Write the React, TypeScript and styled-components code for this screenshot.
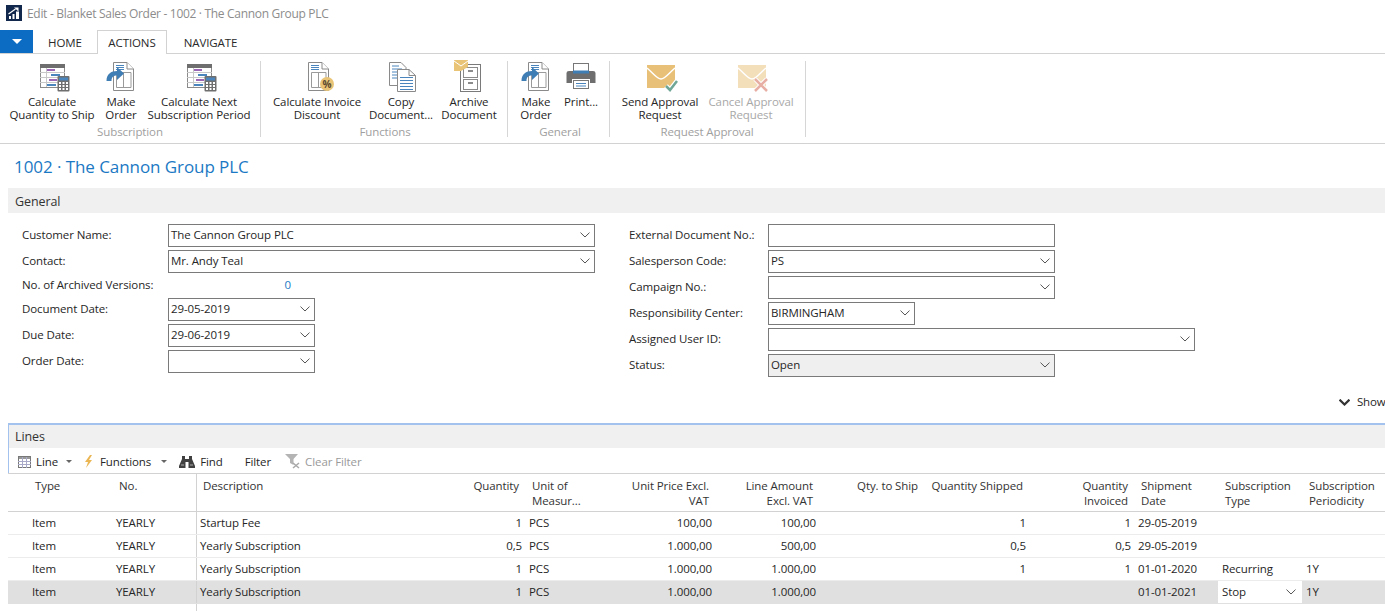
import React from "react";
import styled, { createGlobalStyle } from "styled-components";

const Global = createGlobalStyle`
  html, body { margin: 0; padding: 0; background: #fff; }
  body { width: 1385px; height: 611px; overflow: hidden; font-family: "Open Sans", "Noto Sans", sans-serif; font-size: 12px; color: #262626; }
  * { box-sizing: border-box; }
`;

const Page = styled.div`
  width: 1385px; height: 611px; overflow: hidden; display: flex; flex-direction: column;
  font-size: 11.5px; letter-spacing: -0.1px;
`;
const TitleBar = styled.div`
  height: 30px; display: flex; align-items: center; gap: 5px; padding: 0 0 4px 6px; flex: none;
`;
const TitleText = styled.span`
  color: #8c8c8c; font-size: 12px; letter-spacing: -0.31px;
`;
const TabBar = styled.div`
  height: 24px; display: flex; border-bottom: 1px solid #d2d2d2; flex: none;
`;
const AppMenu = styled.div`
  width: 33px; height: 23px; background: #0c6cc4; display: flex; align-items: center; justify-content: center;
`;
const Tab = styled.div<{ $active?: boolean; $w: number; $ml: number }>`
  width: ${p => p.$w}px; height: ${p => (p.$active ? 24 : 23)}px; margin-left: ${p => p.$ml}px; display: flex; align-items: center; justify-content: center;
  font-size: 11.5px; color: #2a2a2a; background: #fff; padding-top: ${p => (p.$active ? 0 : 2)}px;
  border: ${p => (p.$active ? "1px solid #d2d2d2" : "none")}; border-bottom: none;
`;
const Ribbon = styled.div`
  height: 90px; display: flex; border-bottom: 1px solid #d2d2d2; padding-top: 7px; flex: none;
`;
const Group = styled.div<{ $pl: number; $pr: number }>`
  height: 76px; padding: 0 ${p => p.$pr}px 0 ${p => p.$pl}px; display: flex; flex-direction: column;
  border-right: 1px solid #d6d6d6;
`;
const GroupButtons = styled.div`
  display: flex; height: 64px; flex: none;
`;
const GroupLabel = styled.div`
  text-align: center; color: #a0a0a0; font-size: 11.5px; line-height: 14px;
`;
const RibbonButton = styled.div<{ $w: number; $disabled?: boolean }>`
  width: ${p => p.$w}px; display: flex; flex-direction: column; align-items: center; text-align: center;
  line-height: 13px; white-space: nowrap; color: ${p => (p.$disabled ? "#a8a8a8" : "#262626")};
`;
const IconSlot = styled.div<{ $dx?: number }>`
  height: 30px; margin: 1px 0 3px ${p => p.$dx ?? 0}px; flex: none;
  svg { display: block; overflow: visible; }
`;
const Heading = styled.h1`
  margin: 0; height: 44px; padding: 12px 0 0 14px; font-size: 17px; font-weight: 400; line-height: 21px; color: #1b79c4; letter-spacing: -0.07px; flex: none;
`;
const Band = styled.div`
  margin-left: 8px; height: 25px; background: #f0f0f0; display: flex; align-items: center; padding: 1px 0 0 7px; font-size: 12.5px; color: #333; flex: none;
`;
const Form = styled.div`
  height: 163px; padding: 11px 0 0 22px; display: flex; align-items: flex-start; flex: none;
`;
const FormCol = styled.div<{ $w: number }>`
  width: ${p => p.$w}px; display: flex; flex-direction: column; flex: none;
`;
const FieldRow = styled.div<{ $h?: number }>`
  height: ${p => p.$h ?? 26}px; display: flex; align-items: flex-start; flex: none;
`;
const Label = styled.div<{ $w: number; $lh?: number }>`
  width: ${p => p.$w}px; flex: none; line-height: ${p => p.$lh ?? 21}px;
`;
const Input = styled.div<{ $w: number; $bg?: string }>`
  width: ${p => p.$w}px; height: 23px; border: 1px solid #7a7a7a; background: ${p => p.$bg ?? "#fff"};
  display: flex; align-items: center; justify-content: space-between; padding: 0 4px 1px 2px; line-height: 20px;
`;
const ValueLink = styled.div`
  width: 123px; text-align: right; line-height: 18px; color: #1b79c4;
`;
const ShowRow = styled.div`
  height: 48px; padding: 17px 0 0 1339px; display: flex; align-items: flex-start; gap: 7px; white-space: nowrap; line-height: 18px; letter-spacing: -0.2px; flex: none;
  svg { margin-top: 6px; flex: none; }
`;
const LinesBox = styled.div`
  margin-left: 8px; border-top: 2px solid #a3c3ee; border-left: 1px solid #a3c3ee; height: 50px; flex: none; margin-top: -1px;
`;
const LinesHead = styled.div`
  height: 23px; background: #f0f0f0; display: flex; align-items: center; padding-left: 6px; font-size: 12.5px; color: #333;
`;
const Toolbar = styled.div`
  height: 25px; display: flex; align-items: center; padding: 2px 0 0 9px; line-height: 16px;
`;
const ToolItem = styled.div<{ $mr: number; $gap?: number; $disabled?: boolean }>`
  display: flex; align-items: center; gap: ${p => p.$gap ?? 5}px; margin-right: ${p => p.$mr}px; color: ${p => (p.$disabled ? "#9a9a9a" : "#262626")};
`;
const Caret = styled.span`
  width: 0; height: 0; border-left: 3px solid transparent; border-right: 3px solid transparent; border-top: 3px solid #666; margin-left: 3px;
`;
const COLS = "104px 84px 269px 60px 86px 104px 104px 105px 105px 105px 84px 84px 83px";
const TableWrap = styled.div`
  margin-left: 8px; border-top: 1px solid #d2d2d2; flex: 1;
`;
const HeaderRow = styled.div`
  display: grid; grid-template-columns: ${COLS}; height: 38px; border-bottom: 1px solid #d2d2d2;
`;
const HeadCell = styled.div<{ $right?: boolean; $divider?: boolean; $first?: boolean }>`
  padding: 4px 6px 0 ${p => (p.$first ? 27 : p.$divider ? 6 : 7)}px; line-height: 15px; text-align: ${p => (p.$right ? "right" : "left")}; color: #333;
  border-left: ${p => (p.$divider ? "1px solid #d2d2d2" : "none")}; white-space: pre-line;
`;
const Row = styled.div<{ $selected?: boolean }>`
  display: grid; grid-template-columns: ${COLS}; height: 23px; border-bottom: 1px solid ${p => (p.$selected ? "#e0e0e0" : "#ececec")};
  background: ${p => (p.$selected ? "#e0e0e0" : "#fff")};
`;
const Cell = styled.div<{ $right?: boolean; $divider?: boolean; $first?: boolean; $edit?: boolean }>`
  padding: 0 ${p => (p.$right ? 3 : 4)}px 0 ${p => (p.$first ? 24 : p.$divider ? 3 : 4)}px; line-height: 22px; text-align: ${p => (p.$right ? "right" : "left")};
  border-left: ${p => (p.$divider ? "1px solid #d2d2d2" : "none")}; white-space: nowrap; overflow: hidden;
  ${p => (p.$edit ? "background:#fff;display:flex;align-items:center;justify-content:space-between;padding-right:6px;" : "")}
`;
const Filler = styled.div`
  height: 8px; margin-left: 188px; border-left: 1px solid #d2d2d2;
`;

const Chevron = ({ c = "#555", w = 1, s = 10 }: { c?: string; w?: number; s?: number }) => (
  <svg width={s} height={s * 0.6} viewBox="0 0 10 6" fill="none"><path d="M0.5 0.6 L5 5 L9.5 0.6" stroke={c} strokeWidth={w} /></svg>
);

const AppIcon = () => (
  <svg width="16" height="16" viewBox="0 0 16 16">
    <rect width="16" height="16" fill="#12284c" />
    <path d="M3 14V11H5V14ZM6.5 14V9H8.5V14ZM10 14V6.5H13V14Z" fill="#fff" />
    <path d="M2.5 9 L9.5 4" stroke="#fff" strokeWidth="1.2" fill="none" />
    <path d="M8 2.5H12.5V6.5Z" fill="#fff" />
  </svg>
);

const CalcIcon = () => (
  <svg width="30" height="30" viewBox="0 0 30 30">
    <rect x="0.5" y="2.5" width="24" height="23" fill="#fff" stroke="#8a8a8a" />
    <rect x="0" y="2" width="25" height="4" fill="#6e6e6e" />
    <g stroke="#c8c8c8"><path d="M0 10.5H25M0 15.5H25M0 20.5H25M6.5 6V25" /></g>
    <rect x="7" y="7" width="8" height="2" fill="#9a65b4" />
    <rect x="11" y="12" width="9" height="2" fill="#4a86bd" />
    <rect x="9" y="17" width="8" height="2" fill="#9a65b4" />
    <rect x="7" y="22" width="9" height="2" fill="#4a86bd" />
    <rect x="17.5" y="14" width="12" height="15.5" rx="1" fill="#6f6f6f" />
    <rect x="19" y="15.5" width="9" height="3" fill="#4a86bd" />
    <g fill="#fff">
      {[19, 22.5, 26].map(x => [20, 23, 26].map(y => <rect key={`${x}-${y}`} x={x} y={y} width="2" height="2" />))}
    </g>
  </svg>
);

const Doc = () => (
  <>
    <path d="M7.5 0.5 H21 L27.5 7 V28.5 H7.5 Z" fill="#fff" stroke="#8a8a8a" />
    <path d="M21 0.5 V7 H27.5" fill="#fff" stroke="#8a8a8a" />
    <path d="M10 3.5h8M10 5.5h8M10 7.5h8" stroke="#4a86bd" />
    <path d="M10.5 10.5 H25 V25.5 H10.5 Z M17.5 10.5 V25.5" fill="none" stroke="#9a9a9a" />
  </>
);
const MakeOrderIcon = () => (
  <svg width="30" height="30" viewBox="0 0 30 30">
    <Doc />
    <path d="M0.5 19 C0.5 12 5 9 11 9 V5 L18 11.5 L11 18 V13.5 C7.5 13.5 5.5 15 5.5 19 Z" fill="#3f7db5" />
  </svg>
);
const DiscountIcon = () => (
  <svg width="30" height="30" viewBox="0 0 30 30">
    <g transform="translate(-1 0)"><Doc /></g>
    <circle cx="25" cy="22" r="7" fill="#e9c477" />
    <text x="25" y="26" textAnchor="middle" fontSize="10" fontWeight="700" fill="#5a4a30" fontFamily="Open Sans">%</text>
  </svg>
);
const CopyIcon = () => (
  <svg width="30" height="30" viewBox="0 0 30 30">
    <path d="M3.5 0.5 H15 L20 5.5 V23.5 H3.5 Z" fill="#fff" stroke="#8a8a8a" />
    <path d="M6 4h7M6 7h10M6 10h10M6 13h10M6 16h10" stroke="#4a86bd" />
    <path d="M11.5 7.5 H23 L29.5 13.5 V29.5 H11.5 Z" fill="#fff" stroke="#8a8a8a" />
    <path d="M23 7.5V13.5H29.5" fill="none" stroke="#8a8a8a" />
    <path d="M14 15.5h13M14 18.5h13M14 21.5h13M14 24.5h13M14 27.5h13" stroke="#4a86bd" />
  </svg>
);
const ArchiveIcon = () => (
  <svg width="30" height="30" viewBox="0 0 30 30">
    <rect x="6.5" y="2.5" width="20" height="27" fill="#fff" stroke="#7a7a7a" />
    <rect x="9.5" y="5.5" width="14" height="10" fill="#fff" stroke="#8a8a8a" />
    <rect x="9.5" y="17.5" width="14" height="10" fill="#fff" stroke="#8a8a8a" />
    <path d="M14 9h5M14 21h5" stroke="#666" strokeWidth="1.5" />
    <path d="M0 -2H14V5L7 9H0Z" fill="#e9c477" />
    <path d="M0 -1 L7 4 L14 -1" stroke="#fff" fill="none" />
  </svg>
);
const PrintIcon = () => (
  <svg width="30" height="30" viewBox="0 0 30 30">
    <rect x="7.5" y="1.5" width="15" height="9" fill="#fff" stroke="#777" />
    <path d="M3 9 H27 Q29.5 9 29.5 11 V21 H24 V17 H6 V21 H0.5 V11 Q0.5 9 3 9 Z" fill="#6e6e6e" />
    <rect x="7" y="8.5" width="16" height="3" fill="#3f7db5" />
    <rect x="7.5" y="18.5" width="15" height="8" fill="#fff" stroke="#777" />
    <path d="M10 21.5h10M10 24h10" stroke="#4a86bd" />
  </svg>
);
const MailIcon = ({ cancel }: { cancel?: boolean }) => (
  <svg width="32" height="30" viewBox="0 0 32 30">
    <g opacity={cancel ? 0.5 : 1}>
      <rect x="0" y="3" width="28" height="23" fill="#e9c077" />
      <path d="M0 6 C7 12 10 17 14 17 C18 17 21 12 28 6" stroke="#fff" strokeWidth="1.5" fill="none" />
      {cancel ? (
        <>
          <path d="M17 17 L29 29 M29 17 L17 29" stroke="#fff" strokeWidth="4.5" />
          <path d="M17 17 L29 29 M29 17 L17 29" stroke="#d0604c" strokeWidth="2.5" />
        </>
      ) : (
        <>
          <path d="M19 24 L23 28 L30 19" stroke="#fff" strokeWidth="5" fill="none" />
          <path d="M19 24 L23 28 L30 19" stroke="#6fa695" strokeWidth="2.5" fill="none" />
        </>
      )}
    </g>
  </svg>
);
const GridIcon = () => (
  <svg width="13" height="12" viewBox="0 0 13 12">
    <rect x="0.5" y="0.5" width="12" height="11" fill="#fff" stroke="#777" />
    <rect x="1" y="1" width="11" height="2" fill="#999" />
    <path d="M0 5.5H13M0 8.5H13M4.5 1V12M8.5 1V12" stroke="#a8a8c8" />
  </svg>
);
const BoltIcon = () => (
  <svg width="9" height="13" viewBox="0 0 9 13"><path d="M6 0 L1 7 H4 L2 13 L8 5 H5 L8 0 Z" fill="#eab654" /></svg>
);
const BinocIcon = () => (
  <svg width="16" height="12" viewBox="0 0 16 12">
    <path d="M3 0H6V3H10V0H13V3L16 10V12H9.5V6H6.5V12H0V10L3 3Z" fill="#404040" />
    <path d="M2 9h3M11 9h3" stroke="#aaa" />
  </svg>
);
const ClearFilterIcon = () => (
  <svg width="15" height="15" viewBox="0 0 15 15">
    <path d="M0 0H13L8.5 5V11L5 9V5Z" fill="#b4b4b4" />
    <path d="M8 9 L14 14 M14 9 L8 14" stroke="#a8a8a8" strokeWidth="1.5" />
  </svg>
);

type Btn = { w: number; lines: string[]; icon: React.ReactNode; dx?: number; disabled?: boolean };
type Grp = { label: string; pl: number; pr: number; buttons: Btn[] };
const groups: Grp[] = [
  { label: "Subscription", pl: 8, pr: 8, buttons: [
    { w: 88, lines: ["Calculate", "Quantity to Ship"], icon: <CalcIcon />, dx: 5 },
    { w: 50, lines: ["Make", "Order"], icon: <MakeOrderIcon /> },
    { w: 106, lines: ["Calculate Next", "Subscription Period"], icon: <CalcIcon />, dx: 5 },
  ]},
  { label: "Functions", pl: 11, pr: 9, buttons: [
    { w: 90, lines: ["Calculate Invoice", "Discount"], icon: <DiscountIcon /> },
    { w: 78, lines: ["Copy", "Document..."], icon: <CopyIcon /> },
    { w: 58, lines: ["Archive", "Document"], icon: <ArchiveIcon /> },
  ]},
  { label: "General", pl: 7, pr: 4, buttons: [
    { w: 42, lines: ["Make", "Order"], icon: <MakeOrderIcon /> },
    { w: 48, lines: ["Print..."], icon: <PrintIcon /> },
  ]},
  { label: "Request Approval", pl: 6, pr: 7, buttons: [
    { w: 88, lines: ["Send Approval", "Request"], icon: <MailIcon />, dx: 6 },
    { w: 94, lines: ["Cancel Approval", "Request"], icon: <MailIcon cancel />, dx: 6, disabled: true },
  ]},
];

const heads: { t: string; r?: boolean }[] = [
  { t: "Type" }, { t: "No." }, { t: "Description" }, { t: "Quantity", r: true },
  { t: "Unit of\nMeasur..." }, { t: "Unit Price Excl.\nVAT", r: true }, { t: "Line Amount\nExcl. VAT", r: true },
  { t: "Qty. to Ship", r: true }, { t: "Quantity Shipped", r: true }, { t: "Quantity\nInvoiced", r: true },
  { t: "Shipment\nDate" }, { t: "Subscription\nType" }, { t: "Subscription\nPeriodicity" },
];
const rows: string[][] = [
  ["Item", "YEARLY", "Startup Fee", "1", "PCS", "100,00", "100,00", "", "1", "1", "29-05-2019", "", ""],
  ["Item", "YEARLY", "Yearly Subscription", "0,5", "PCS", "1.000,00", "500,00", "", "0,5", "0,5", "29-05-2019", "", ""],
  ["Item", "YEARLY", "Yearly Subscription", "1", "PCS", "1.000,00", "1.000,00", "", "1", "1", "01-01-2020", "Recurring", "1Y"],
  ["Item", "YEARLY", "Yearly Subscription", "1", "PCS", "1.000,00", "1.000,00", "", "", "", "01-01-2021", "Stop", "1Y"],
];
const rightCols = new Set([3, 5, 6, 7, 8, 9]);

export default function App() {
  return (
    <>
      <Global />
      <Page>
        <TitleBar><AppIcon /><TitleText>Edit - Blanket Sales Order - 1002 · The Cannon Group PLC</TitleText></TitleBar>
        <TabBar>
          <AppMenu><svg width="10" height="5" viewBox="0 0 10 5"><path d="M0 0H10L5 5Z" fill="#fff" /></svg></AppMenu>
          <Tab $w={36} $ml={14}>HOME</Tab>
          <Tab $w={70} $ml={14} $active>ACTIONS</Tab>
          <Tab $w={55} $ml={16}>NAVIGATE</Tab>
        </TabBar>
        <Ribbon>
          {groups.map(g => (
            <Group key={g.label} $pl={g.pl} $pr={g.pr}>
              <GroupButtons>
                {g.buttons.map(b => (
                  <RibbonButton key={b.lines.join()} $w={b.w} $disabled={b.disabled}>
                    <IconSlot $dx={b.dx}>{b.icon}</IconSlot>
                    {b.lines.map(l => <span key={l}>{l}</span>)}
                  </RibbonButton>
                ))}
              </GroupButtons>
              <GroupLabel>{g.label}</GroupLabel>
            </Group>
          ))}
        </Ribbon>
        <Heading>1002 · The Cannon Group PLC</Heading>
        <Band>General</Band>
        <Form>
          <FormCol $w={607}>
            <FieldRow><Label $w={146}>Customer Name:</Label><Input $w={427}>The Cannon Group PLC<Chevron /></Input></FieldRow>
            <FieldRow><Label $w={146}>Contact:</Label><Input $w={427}>Mr. Andy Teal<Chevron /></Input></FieldRow>
            <FieldRow $h={22}><Label $w={146} $lh={18}>No. of Archived Versions:</Label><ValueLink>0</ValueLink></FieldRow>
            <FieldRow><Label $w={146}>Document Date:</Label><Input $w={147}>29-05-2019<Chevron /></Input></FieldRow>
            <FieldRow><Label $w={146}>Due Date:</Label><Input $w={147}>29-06-2019<Chevron /></Input></FieldRow>
            <FieldRow><Label $w={146}>Order Date:</Label><Input $w={147}><span /><Chevron /></Input></FieldRow>
          </FormCol>
          <FormCol $w={600}>
            <FieldRow><Label $w={139}>External Document No.:</Label><Input $w={287} /></FieldRow>
            <FieldRow><Label $w={139}>Salesperson Code:</Label><Input $w={287}>PS<Chevron /></Input></FieldRow>
            <FieldRow><Label $w={139}>Campaign No.:</Label><Input $w={287}><span /><Chevron /></Input></FieldRow>
            <FieldRow><Label $w={139}>Responsibility Center:</Label><Input $w={147}>BIRMINGHAM<Chevron /></Input></FieldRow>
            <FieldRow><Label $w={139}>Assigned User ID:</Label><Input $w={427}><span /><Chevron /></Input></FieldRow>
            <FieldRow><Label $w={139}>Status:</Label><Input $w={287} $bg="#efefef">Open<Chevron /></Input></FieldRow>
          </FormCol>
        </Form>
        <ShowRow><Chevron c="#333" w={2} s={11} />Show</ShowRow>
        <LinesBox>
          <LinesHead>Lines</LinesHead>
          <Toolbar>
            <ToolItem $mr={12}><GridIcon />Line<Caret /></ToolItem>
            <ToolItem $mr={12} $gap={7}><BoltIcon />Functions<Caret /></ToolItem>
            <ToolItem $mr={22}><BinocIcon />Find</ToolItem>
            <ToolItem $mr={14}>Filter</ToolItem>
            <ToolItem $mr={0} $disabled><ClearFilterIcon />Clear Filter</ToolItem>
          </Toolbar>
        </LinesBox>
        <TableWrap>
          <HeaderRow>
            {heads.map((h, i) => <HeadCell key={h.t} $right={h.r} $first={i === 0} $divider={i === 2}>{h.t}</HeadCell>)}
          </HeaderRow>
          {rows.map((r, i) => (
            <Row key={i} $selected={i === 3}>
              {r.map((c, j) => (
                <Cell key={j} $right={rightCols.has(j)} $first={j === 0} $divider={j === 2} $edit={i === 3 && j === 11}>
                  {c}{i === 3 && j === 11 && <Chevron />}
                </Cell>
              ))}
            </Row>
          ))}
          <Filler />
        </TableWrap>
      </Page>
    </>
  );
}
